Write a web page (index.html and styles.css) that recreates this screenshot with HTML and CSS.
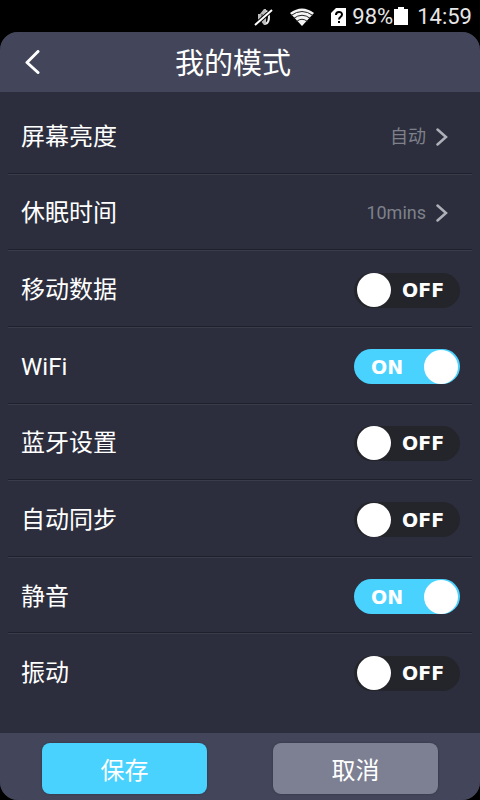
FILE: index.html
```html
<!DOCTYPE html>
<html lang="zh-CN">
<head>
<meta charset="utf-8">
<meta name="viewport" content="width=device-width, initial-scale=1">
<title>我的模式</title>
<link rel="stylesheet" href="styles.css">
</head>
<body>
<div class="status">
  <svg class="mute" width="20" height="20" viewBox="0 0 20 20" aria-hidden="true">
    <path d="M4 7h2l4-5h2v16h-2l-4-5H4z" fill="#bbb"/>
    <path d="M8 7v6" stroke="#333" stroke-width="1"/>
    <path d="M12 4c4 2 4 10 0 13" fill="none" stroke="#eee" stroke-width="2"/>
    <path d="M1 18 18 3" stroke="#000" stroke-width="4"/>
    <path d="M1 18 18 3" stroke="#fff" stroke-width="2"/>
  </svg>
  <svg class="wifi" width="26" height="18" viewBox="0 0 26 18" aria-hidden="true">
    <path d="M1 5Q13-4 25 5L13 18z" fill="#f4f4f4"/>
    <path d="M2 7.500Q13-.5 24 7.500M4.500 10.500Q13 4 21.500 10.500M7.500 13.500Q13 9 18.500 13.500" fill="none" stroke="#222" stroke-width="1"/>
  </svg>
  <svg class="sim" width="16" height="18" viewBox="0 0 16 18" aria-hidden="true">
    <path d="M5 0h10v18H0V5z" fill="#fff"/>
    <path d="M5 7c0-4 6-4 6-.5C11 9 8 9 8 11.500" fill="none" stroke="#000" stroke-width="2"/>
    <path d="M7 13h2v2H7z"/>
  </svg>
  <span class="percent">98%</span>
  <svg class="battery" width="14" height="18" viewBox="0 0 14 18" aria-hidden="true">
    <path d="M4 0h6v2h4v16H0V2h4z" fill="#fff"/>
  </svg>
  <time class="clock">14:59</time>
</div>
<div class="app">
  <header class="header">
    <button class="back" type="button" aria-label="返回">
      <svg width="16" height="24" viewBox="0 0 16 24" aria-hidden="true"><path d="M14 1.500 3 12.500l11 10" fill="none" stroke="#fff" stroke-width="3" stroke-linecap="round" stroke-linejoin="round"/></svg>
    </button>
    <h1 class="title">我的模式</h1>
  </header>
  <main class="list">
    <button class="row" type="button"><span class="name">屏幕亮度</span><span class="value">自动</span><svg class="chevron" width="12" height="18" viewBox="0 0 12 18" aria-hidden="true"><path d="M1.500 1.500 10 9l-8.500 7.500" fill="none" stroke="#aeb0b8" stroke-width="2.500" stroke-linecap="round"/></svg></button>
    <button class="row" type="button"><span class="name">休眠时间</span><span class="value">10mins</span><svg class="chevron" width="12" height="18" viewBox="0 0 12 18" aria-hidden="true"><path d="M1.500 1.500 10 9l-8.500 7.500" fill="none" stroke="#aeb0b8" stroke-width="2.500" stroke-linecap="round"/></svg></button>
    <label class="row"><span class="name">移动数据</span><span class="switch"><input type="checkbox"><span class="on">ON</span><span class="off">OFF</span></span></label>
    <label class="row"><span class="name">WiFi</span><span class="switch"><input type="checkbox" checked><span class="on">ON</span><span class="off">OFF</span></span></label>
    <label class="row"><span class="name">蓝牙设置</span><span class="switch"><input type="checkbox"><span class="on">ON</span><span class="off">OFF</span></span></label>
    <label class="row"><span class="name">自动同步</span><span class="switch"><input type="checkbox"><span class="on">ON</span><span class="off">OFF</span></span></label>
    <label class="row"><span class="name">静音</span><span class="switch"><input type="checkbox" checked><span class="on">ON</span><span class="off">OFF</span></span></label>
    <label class="row"><span class="name">振动</span><span class="switch"><input type="checkbox"><span class="on">ON</span><span class="off">OFF</span></span></label>
  </main>
  <footer class="footer">
    <button class="action save" type="button">保存</button>
    <button class="action cancel" type="button">取消</button>
  </footer>
</div>
</body>
</html>
```
FILE: styles.css
```css
* { box-sizing: border-box; }

body {
  margin: 0;
  min-height: 100vh;
  display: flex;
  flex-direction: column;
  background: #000;
  color: #fff;
  font-family: Roboto, "Noto Sans CJK SC", sans-serif;
}

button {
  font: inherit;
  color: inherit;
  border: 0;
  background: none;
  cursor: pointer;
}

.status {
  height: 32px;
  padding: 2px 8px 0 0;
  display: flex;
  align-items: center;
  justify-content: flex-end;
  color: #e6e6e6;
  font-size: 22px;
  line-height: 28px;
}
.wifi { margin-left: 15px; }
.sim { margin-left: 16px; }
.percent { margin-left: 5px; }
.battery { margin-left: 1px; margin-bottom: 2px; }
.clock { margin-left: 9px; }

.app {
  flex: 1;
  display: flex;
  flex-direction: column;
  overflow: hidden;
  border-radius: 18px;
  background: #2c2e3d;
}

.header {
  height: 60px;
  display: grid;
  grid-template-columns: 64px 1fr 78px;
  align-items: center;
  background: #43465a;
}
.back {
  height: 60px;
  padding: 0;
  display: grid;
  place-items: center;
}
.title {
  margin: 0;
  padding-top: 4px;
  text-align: center;
  font-size: 29px;
  font-weight: 400;
  line-height: 40px;
}

.list {
  flex: 1;
  display: grid;
  grid-auto-rows: 1fr;
  padding: 5px 8px 23px;
}
.row {
  display: flex;
  align-items: center;
  padding: 4px 12px 0 13px;
  text-align: left;
  border-bottom: 1px solid #1f202c;
  box-shadow: 0 1px #3a3c4b;
}
.row:last-child {
  border-color: transparent;
  box-shadow: none;
}
.name {
  flex: 1;
  font-size: 24px;
  line-height: 36px;
}
.value {
  color: #7e818a;
  font-size: 18px;
  line-height: 28px;
}
.chevron { margin: 0 12px 0 10px; }

.switch {
  display: grid;
  align-items: center;
  width: 106px;
  height: 35px;
  font-family: "DejaVu Sans", sans-serif;
  font-size: 19px;
  font-weight: 700;
  line-height: 24px;
}
.switch > * { grid-area: 1 / 1; }
.switch input {
  appearance: none;
  width: 100%;
  height: 100%;
  margin: 0;
  padding: 0 2px 0 3px;
  display: flex;
  align-items: center;
  border-radius: 18px;
  background: #24252a;
  cursor: pointer;
}
.switch input::before {
  content: "";
  width: 34px;
  height: 34px;
  border-radius: 50%;
  background: #fff;
}
.switch input:checked {
  justify-content: flex-end;
  background: #4ad2ff;
}
.switch span { z-index: 1; }
.on { padding-left: 17px; }
.off { padding-left: 48px; }
.switch input:checked ~ .off,
.switch input:not(:checked) ~ .on { visibility: hidden; }

.footer {
  height: 67px;
  padding: 10px 42px 6px;
  display: grid;
  grid-template-columns: 1fr 1fr;
  gap: 66px;
  background: #43465a;
}
.action {
  padding: 4px 0 0;
  border-radius: 8px;
  font-size: 24px;
  line-height: 36px;
  box-shadow: 0 0 2px #2c2e3d;
}
.save { background: #4ad2ff; }
.cancel { background: #7d7f92; }
```
